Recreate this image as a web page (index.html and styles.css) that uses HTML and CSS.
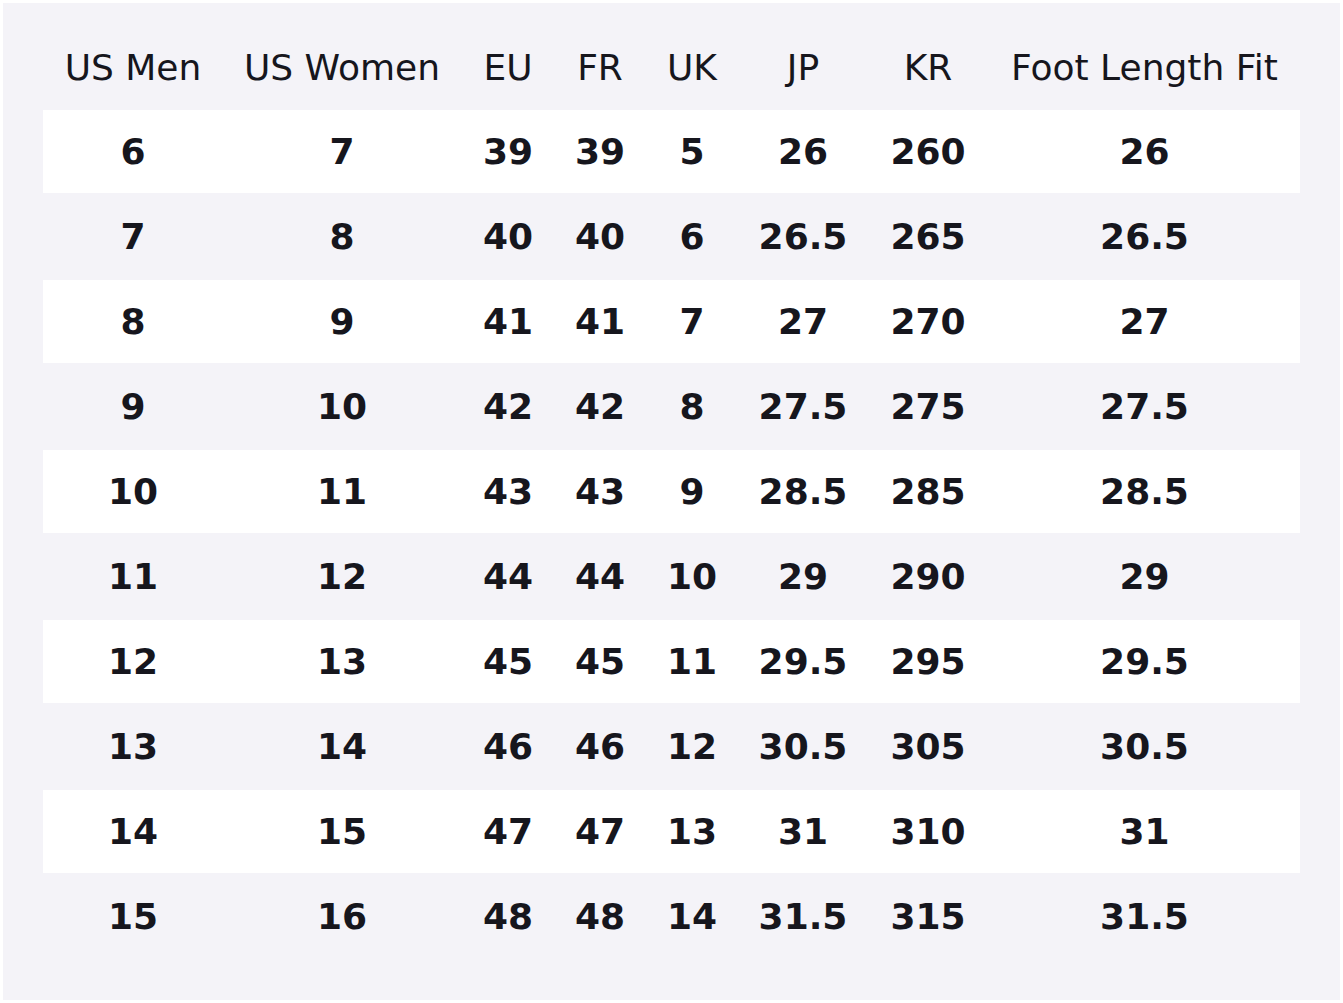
FILE: index.html
```html
<!DOCTYPE html>
<html lang="en">
<head>
<meta charset="utf-8">
<title>Size Chart</title>
<link rel="stylesheet" href="styles.css">
</head>
<body>
<div class="panel">
  <table class="sizes">
    <colgroup>
      <col class="c1"><col class="c2"><col class="c3"><col class="c4"><col class="c5"><col class="c6"><col class="c7"><col class="c8">
    </colgroup>
    <thead>
      <tr><th>US Men</th><th>US Women</th><th>EU</th><th>FR</th><th>UK</th><th>JP</th><th>KR</th><th>Foot Length Fit</th></tr>
    </thead>
    <tbody>
      <tr class="odd"><td>6</td><td>7</td><td>39</td><td>39</td><td>5</td><td>26</td><td>260</td><td>26</td></tr>
      <tr><td>7</td><td>8</td><td>40</td><td>40</td><td>6</td><td>26.5</td><td>265</td><td>26.5</td></tr>
      <tr class="odd"><td>8</td><td>9</td><td>41</td><td>41</td><td>7</td><td>27</td><td>270</td><td>27</td></tr>
      <tr><td>9</td><td>10</td><td>42</td><td>42</td><td>8</td><td>27.5</td><td>275</td><td>27.5</td></tr>
      <tr class="odd"><td>10</td><td>11</td><td>43</td><td>43</td><td>9</td><td>28.5</td><td>285</td><td>28.5</td></tr>
      <tr><td>11</td><td>12</td><td>44</td><td>44</td><td>10</td><td>29</td><td>290</td><td>29</td></tr>
      <tr class="odd"><td>12</td><td>13</td><td>45</td><td>45</td><td>11</td><td>29.5</td><td>295</td><td>29.5</td></tr>
      <tr><td>13</td><td>14</td><td>46</td><td>46</td><td>12</td><td>30.5</td><td>305</td><td>30.5</td></tr>
      <tr class="odd"><td>14</td><td>15</td><td>47</td><td>47</td><td>13</td><td>31</td><td>310</td><td>31</td></tr>
      <tr><td>15</td><td>16</td><td>48</td><td>48</td><td>14</td><td>31.5</td><td>315</td><td>31.5</td></tr>
    </tbody>
  </table>
</div>
</body>
</html>
```
FILE: styles.css
```css
html, body {
  margin: 0;
  background: #ffffff;
}
body {
  padding: 3px;
  font-family: "DejaVu Sans", sans-serif;
  color: #16161d;
}
.panel {
  background: #f4f3f8;
  padding: 40px;
}
.sizes {
  width: 100%;
  table-layout: fixed;
  border-collapse: separate;
  border-spacing: 0 2px;
  font-size: 36px;
}
.c1 { width: 180px; }
.c2 { width: 238px; }
.c3 { width: 94px; }
.c4 { width: 90px; }
.c5 { width: 94px; }
.c6 { width: 128px; }
.c7 { width: 122px; }
.c8 { width: 311px; }
.sizes th {
  font-weight: normal;
  text-align: center;
  vertical-align: top;
  height: 63px;
  line-height: 42px;
  padding: 2px 0 19px;
  box-sizing: border-box;
  white-space: nowrap;
}
.sizes td {
  font-weight: bold;
  text-align: center;
  vertical-align: middle;
  height: 83px;
  padding: 0;
  line-height: 42px;
  white-space: nowrap;
}
.sizes tr.odd td {
  background: #ffffff;
}
```
